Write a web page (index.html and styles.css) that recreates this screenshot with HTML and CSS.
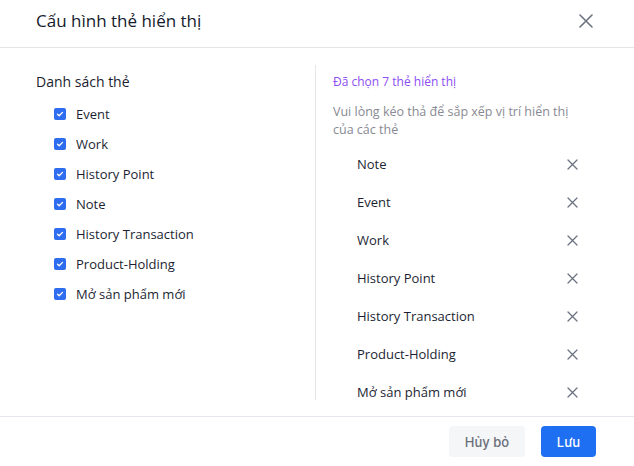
FILE: index.html
```html
<!DOCTYPE html>
<html lang="vi">
<head>
<meta charset="utf-8">
<link rel="stylesheet" href="styles.css">
</head>
<body>
<div class="modal">
  <div class="header">
    <div class="title">Cấu hình thẻ hiển thị</div>
    <button class="close" aria-label="Đóng">
      <svg width="14" height="14" viewBox="0 0 14 14"><path d="M1 1L13 13M13 1L1 13" stroke="#6b7280" stroke-width="1.6" stroke-linecap="round"/></svg>
    </button>
  </div>
  <div class="body">
    <div class="left">
      <div class="section-title">Danh sách thẻ</div>
      <ul class="checklist">
        <li><span class="cb"><svg width="8" height="8" viewBox="0 0 8 8"><path d="M1.5 4.2L3.2 5.8L6.5 2.4" stroke="#fff" stroke-width="1.3" fill="none" stroke-linecap="round" stroke-linejoin="round"/></svg></span>Event</li>
        <li><span class="cb"><svg width="8" height="8" viewBox="0 0 8 8"><path d="M1.5 4.2L3.2 5.8L6.5 2.4" stroke="#fff" stroke-width="1.3" fill="none" stroke-linecap="round" stroke-linejoin="round"/></svg></span>Work</li>
        <li><span class="cb"><svg width="8" height="8" viewBox="0 0 8 8"><path d="M1.5 4.2L3.2 5.8L6.5 2.4" stroke="#fff" stroke-width="1.3" fill="none" stroke-linecap="round" stroke-linejoin="round"/></svg></span>History Point</li>
        <li><span class="cb"><svg width="8" height="8" viewBox="0 0 8 8"><path d="M1.5 4.2L3.2 5.8L6.5 2.4" stroke="#fff" stroke-width="1.3" fill="none" stroke-linecap="round" stroke-linejoin="round"/></svg></span>Note</li>
        <li><span class="cb"><svg width="8" height="8" viewBox="0 0 8 8"><path d="M1.5 4.2L3.2 5.8L6.5 2.4" stroke="#fff" stroke-width="1.3" fill="none" stroke-linecap="round" stroke-linejoin="round"/></svg></span>History Transaction</li>
        <li><span class="cb"><svg width="8" height="8" viewBox="0 0 8 8"><path d="M1.5 4.2L3.2 5.8L6.5 2.4" stroke="#fff" stroke-width="1.3" fill="none" stroke-linecap="round" stroke-linejoin="round"/></svg></span>Product-Holding</li>
        <li><span class="cb"><svg width="8" height="8" viewBox="0 0 8 8"><path d="M1.5 4.2L3.2 5.8L6.5 2.4" stroke="#fff" stroke-width="1.3" fill="none" stroke-linecap="round" stroke-linejoin="round"/></svg></span>Mở sản phẩm mới</li>
      </ul>
    </div>
    <div class="right">
      <div class="selected-count">Đã chọn 7 thẻ hiển thị</div>
      <div class="hint">Vui lòng kéo thả để sắp xếp vị trí hiển thị của các thẻ</div>
      <ul class="sortlist">
        <li><span>Note</span><svg class="x" width="11" height="11" viewBox="0 0 11 11"><path d="M1 1L10 10M10 1L1 10" stroke="#6b7280" stroke-width="1.3" stroke-linecap="round"/></svg></li>
        <li><span>Event</span><svg class="x" width="11" height="11" viewBox="0 0 11 11"><path d="M1 1L10 10M10 1L1 10" stroke="#6b7280" stroke-width="1.3" stroke-linecap="round"/></svg></li>
        <li><span>Work</span><svg class="x" width="11" height="11" viewBox="0 0 11 11"><path d="M1 1L10 10M10 1L1 10" stroke="#6b7280" stroke-width="1.3" stroke-linecap="round"/></svg></li>
        <li><span>History Point</span><svg class="x" width="11" height="11" viewBox="0 0 11 11"><path d="M1 1L10 10M10 1L1 10" stroke="#6b7280" stroke-width="1.3" stroke-linecap="round"/></svg></li>
        <li><span>History Transaction</span><svg class="x" width="11" height="11" viewBox="0 0 11 11"><path d="M1 1L10 10M10 1L1 10" stroke="#6b7280" stroke-width="1.3" stroke-linecap="round"/></svg></li>
        <li><span>Product-Holding</span><svg class="x" width="11" height="11" viewBox="0 0 11 11"><path d="M1 1L10 10M10 1L1 10" stroke="#6b7280" stroke-width="1.3" stroke-linecap="round"/></svg></li>
        <li><span>Mở sản phẩm mới</span><svg class="x" width="11" height="11" viewBox="0 0 11 11"><path d="M1 1L10 10M10 1L1 10" stroke="#6b7280" stroke-width="1.3" stroke-linecap="round"/></svg></li>
      </ul>
    </div>
  </div>
  <div class="footer">
    <button class="btn btn-cancel">Hủy bỏ</button>
    <button class="btn btn-save">Lưu</button>
  </div>
</div>
</body>
</html>
```
FILE: styles.css
```css
* { box-sizing: border-box; }
html, body { margin: 0; padding: 0; background: #fff; }
body {
  font-family: "Open Sans", "Noto Sans", sans-serif;
  color: #1a1d2e;
  width: 634px;
  height: 466px;
  overflow: hidden;
}
.modal { display: flex; flex-direction: column; height: 466px; }
.header {
  height: 48px;
  border-bottom: 1px solid #e6e6e6;
  display: flex;
  align-items: center;
  justify-content: space-between;
  padding: 0 41px 0 36px;
}
.title { font-size: 17px; font-weight: 500; color: #151a2d; margin-top: -6px; }
.close { border: 0; background: none; padding: 0; width: 14px; height: 14px; margin-top: -5px; display: flex; }
.body {
  display: grid;
  grid-template-columns: 316px 1fr;
  padding-top: 17px;
  height: 368px;
}
.left { padding: 0 0 0 36px; border-right: 1px solid #e6e6e6; height: 335px; }
.section-title { font-size: 14px; font-weight: 500; margin-top: 8px; line-height: 18px; }
.checklist { list-style: none; margin: 8px 0 0; padding: 0 0 0 18px; }
.checklist li {
  height: 30px;
  display: flex;
  align-items: center;
  font-size: 13px;
  color: #1c1f33;
}
.cb {
  width: 12px; height: 12px;
  border-radius: 2px;
  background: #2f6df0;
  display: inline-flex;
  align-items: center;
  justify-content: center;
  margin-right: 10px;
}
.right { padding: 0 0 0 17px; }
.selected-count { font-size: 12px; color: #8c4df2; line-height: 16px; margin-top: 9px; }
.hint { font-size: 12.5px; color: #888a93; line-height: 18px; margin-top: 13px; width: 240px; }
.sortlist { list-style: none; margin: 6px 0 0; padding: 0 56px 0 24px; }
.sortlist li {
  height: 38px;
  display: flex;
  align-items: center;
  justify-content: space-between;
  font-size: 13px;
  color: #1c1f33;
}
.footer {
  border-top: 1px solid #e6e6ee;
  display: flex;
  justify-content: flex-end;
  gap: 16px;
  padding: 9px 38px 0 0;
  flex: 1;
}
.btn {
  height: 31px;
  border: 0;
  border-radius: 4px;
  font-family: "Inter", "Roboto", sans-serif;
  font-size: 13px;
  font-weight: 500;
  padding: 0;
}
.btn-cancel { width: 76px; background: #f5f6f8; color: #6b6f7a; }
.btn-save { width: 55px; background: #1f6ff2; color: #fff; }
```
